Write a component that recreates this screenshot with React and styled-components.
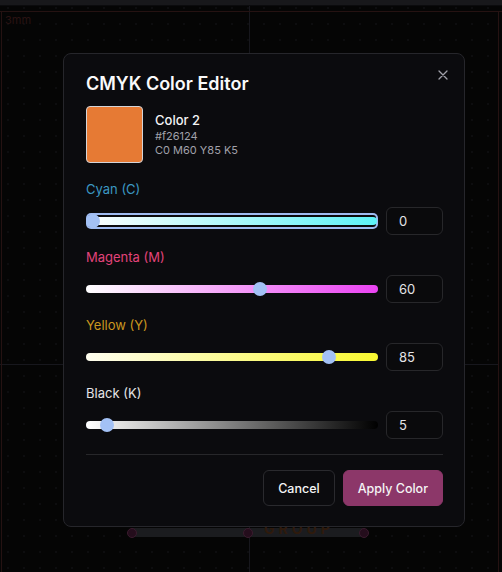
import React from 'react';
import styled, { createGlobalStyle } from 'styled-components';

const GlobalStyle = createGlobalStyle`
  html, body {
    margin: 0;
    padding: 0;
    background: #050505;
  }
  body {
    font-family: Inter, 'Noto Sans', sans-serif;
    -webkit-font-smoothing: antialiased;
  }
`;

// --- page / canvas behind the modal ---

// guide lines of the print sheet are drawn as background layers
const Page = styled.div`
  position: relative;
  width: 502px;
  height: 572px;
  overflow: hidden;
  background-color: #050505;
  background-image:
    linear-gradient(#18181b, #18181b),
    linear-gradient(#0b0b0d, #0b0b0d),
    linear-gradient(#251212, #251212),
    linear-gradient(#251212, #251212),
    linear-gradient(#251212, #251212),
    linear-gradient(#17171d, #17171d),
    linear-gradient(#17171d, #17171d),
    radial-gradient(#0d0d0f 1px, transparent 1px);
  background-repeat: no-repeat, no-repeat, no-repeat, no-repeat, no-repeat, no-repeat, no-repeat, repeat;
  background-size:
    100% 5px,
    100% 1px,
    100% 1px,
    1px 100%,
    1px 100%,
    1px 100%,
    498px 1px,
    16px 16px;
  background-position:
    0 0,
    0 5px,
    0 11px,
    1px 11px,
    498px 11px,
    249px 6px,
    0 364px,
    0 0;
`;

const BleedLabel = styled.span`
  position: absolute;
  left: 5px;
  top: 13px;
  font-size: 11px;
  color: #2a1313;
`;

const GroupBar = styled.div`
  position: absolute;
  left: 127px;
  top: 528px;
  width: 242px;
  height: 10px;
  display: flex;
  justify-content: space-between;
  align-items: center;
  background: linear-gradient(#1b1c1f, #1b1c1f) 5px 0 / 232px 9px no-repeat;
`;

const GroupText = styled.span`
  position: absolute;
  left: 264px;
  top: 520px;
  font-size: 14px;
  font-weight: 700;
  letter-spacing: 4px;
  color: #2e1a0c;
`;

const Handle = styled.span`
  width: 10px;
  height: 10px;
  border-radius: 50%;
  background: #240d1c;
  border: 1px solid #3a1b2e;
  box-sizing: border-box;
`;

// --- dialog ---

const Overlay = styled.div`
  position: absolute;
  inset: 0;
  padding: 53px 0 0 63px;
`;

const Dialog = styled.div`
  position: relative;
  width: 402px;
  box-sizing: border-box;
  padding: 18px 21px 20px 22px;
  background: #0b0b0e;
  border: 1px solid #26262b;
  border-radius: 8px;
  color: #fafafa;
`;

const CloseButton = styled.button`
  position: absolute;
  top: 12px;
  right: 12px;
  width: 18px;
  height: 18px;
  padding: 0;
  border: none;
  background: none;
  display: flex;
  align-items: center;
  justify-content: center;
  color: #a1a1aa;
`;

const Title = styled.h2`
  margin: 0 0 10px;
  font-size: 18px;
  line-height: 24px;
  font-weight: 600;
  color: #fafafa;
`;

const ColorInfo = styled.div`
  display: flex;
  align-items: center;
  gap: 12px;
  margin-bottom: 16px;
`;

const Swatch = styled.div`
  width: 57px;
  height: 57px;
  box-sizing: border-box;
  border-radius: 4px;
  border: 1px solid #d4d4d8;
  background: ${(p) => p.$color};
`;

const ColorMeta = styled.div`
  display: flex;
  flex-direction: column;
`;

const ColorName = styled.span`
  font-size: 13px;
  line-height: 17px;
  font-weight: 500;
  color: #f4f4f5;
`;

const ColorSub = styled.span`
  font-size: 11px;
  line-height: 14px;
  color: #a1a1aa;
`;

const Channels = styled.div`
  display: flex;
  flex-direction: column;
  gap: 12px;
`;

const Channel = styled.div`
  display: flex;
  flex-direction: column;
  gap: 8px;
`;

const ChannelLabel = styled.label`
  font-size: 13px;
  line-height: 20px;
  font-weight: 400;
  color: ${(p) => p.$color};
`;

const ChannelRow = styled.div`
  display: flex;
  align-items: center;
  gap: 8px;
`;

const SliderRoot = styled.div`
  position: relative;
  flex: 1;
  height: 16px;
  display: flex;
  align-items: center;
  box-sizing: border-box;
  border-radius: 5px;
  padding: 0 ${(p) => (p.$focused ? '1px' : '0')};
  box-shadow: ${(p) => (p.$focused ? 'inset 0 0 0 2px #9fbbf1' : 'none')};
`;

const SliderTrack = styled.div`
  flex: 1;
  height: 8px;
  border-radius: 4px;
  background: ${(p) => p.$gradient};
`;

const SliderThumb = styled.div`
  position: absolute;
  top: 1px;
  width: 14px;
  height: 14px;
  border-radius: 50%;
  background: #a3c1f5;
`;

const ValueInput = styled.div`
  width: 57px;
  height: 28px;
  box-sizing: border-box;
  padding: 0 12px;
  display: flex;
  align-items: center;
  border: 1px solid #27272a;
  border-radius: 6px;
  background: #0a0a0c;
  font-size: 13px;
  color: #e4e4e7;
`;

const Divider = styled.hr`
  margin: 15px 0 15px;
  border: none;
  border-top: 1px solid #27272a;
`;

const Footer = styled.div`
  display: flex;
  justify-content: flex-end;
  gap: 8px;
`;

const Button = styled.button`
  height: 36px;
  padding: 0 14px;
  border-radius: 6px;
  font-family: inherit;
  font-size: 12.5px;
  font-weight: 500;
  color: #f4f4f5;
  border: 1px solid ${(p) => (p.$primary ? '#8c3769' : '#2a2a2e')};
  background: ${(p) => (p.$primary ? '#8c3769' : '#0b0b0e')};
`;

// --- data ---

const channels = [
  { key: 'c', label: 'Cyan (C)', color: '#3b98c2', value: 0, gradient: 'linear-gradient(90deg, #ffffff, #5cf2f7)', focused: true },
  { key: 'm', label: 'Magenta (M)', color: '#e2437a', value: 60, gradient: 'linear-gradient(90deg, #ffffff, #ea43f2)' },
  { key: 'y', label: 'Yellow (Y)', color: '#c9961f', value: 85, gradient: 'linear-gradient(90deg, #fffef0, #f9f930)' },
  { key: 'k', label: 'Black (K)', color: '#e4e4e7', value: 5, gradient: 'linear-gradient(90deg, #ffffff, #000000)' },
];

const Slider = ({ value, gradient, focused }) => (
  <SliderRoot $focused={focused}>
    <SliderTrack $gradient={gradient} />
    <SliderThumb style={{ left: `calc((100% - 14px) * ${value / 100})` }} />
  </SliderRoot>
);

const App = () => {
  return (
    <>
      <GlobalStyle />
      <Page>
        <BleedLabel>3mm</BleedLabel>
        <GroupBar>
          <Handle />
          <Handle />
          <Handle />
        </GroupBar>
        <GroupText>GROUP</GroupText>

        <Overlay>
          <Dialog>
            <CloseButton aria-label="Close">
              <svg width="10" height="10" viewBox="0 0 10 10" fill="none">
                <path d="M1 1L9 9M9 1L1 9" stroke="currentColor" strokeWidth="1.3" strokeLinecap="round" />
              </svg>
            </CloseButton>
            <Title>CMYK Color Editor</Title>
            <ColorInfo>
              <Swatch $color="#e67a34" />
              <ColorMeta>
                <ColorName>Color 2</ColorName>
                <ColorSub>#f26124</ColorSub>
                <ColorSub>C0 M60 Y85 K5</ColorSub>
              </ColorMeta>
            </ColorInfo>
            <Channels>
              {channels.map((ch) => (
                <Channel key={ch.key}>
                  <ChannelLabel $color={ch.color}>{ch.label}</ChannelLabel>
                  <ChannelRow>
                    <Slider value={ch.value} gradient={ch.gradient} focused={ch.focused} />
                    <ValueInput>{ch.value}</ValueInput>
                  </ChannelRow>
                </Channel>
              ))}
            </Channels>
            <Divider />
            <Footer>
              <Button>Cancel</Button>
              <Button $primary>Apply Color</Button>
            </Footer>
          </Dialog>
        </Overlay>
      </Page>
    </>
  );
};

export default App;
